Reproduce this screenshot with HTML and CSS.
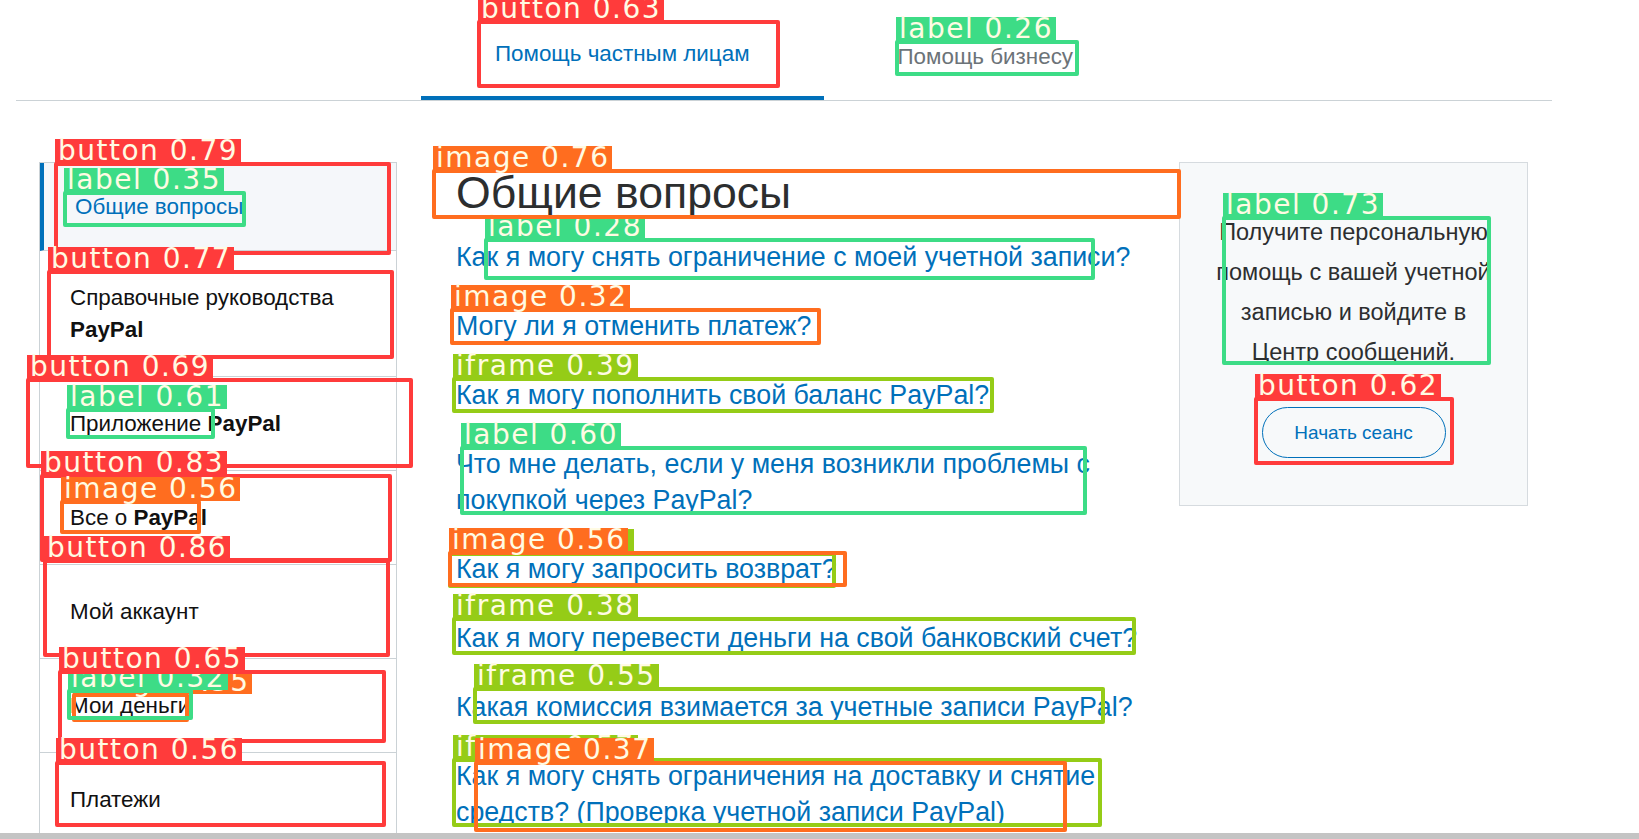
FILE: index.html
```html
<!DOCTYPE html>
<html lang="ru">
<head>
<meta charset="utf-8">
<title>Центр помощи</title>
<link rel="stylesheet" href="styles.css">
</head>
<body>
<div class="page">
  <nav class="tabs">
    <div class="tab active">Помощь частным лицам</div>
    <div class="tab tab-business">Помощь бизнесу</div>
  </nav>
  <div class="content">
    <aside class="nav">
      <div class="nav-item active">Общие вопросы</div>
      <div class="nav-item">Справочные руководства <b>PayPal</b></div>
      <div class="nav-item">Приложение <b>PayPal</b></div>
      <div class="nav-item">Все о <b>PayPal</b></div>
      <div class="nav-item">Мой аккаунт</div>
      <div class="nav-item">Мои деньги</div>
      <div class="nav-item">Платежи</div>
    </aside>
    <main class="main">
      <h1>Общие вопросы</h1>
      <ul class="faq">
        <li>Как я могу снять ограничение с моей учетной записи?</li>
        <li>Могу ли я отменить платеж?</li>
        <li>Как я могу пополнить свой баланс PayPal?</li>
        <li>Что мне делать, если у меня возникли проблемы с покупкой через PayPal?</li>
        <li>Как я могу запросить возврат?</li>
        <li>Как я могу перевести деньги на свой банковский счет?</li>
        <li>Какая комиссия взимается за учетные записи PayPal?</li>
        <li>Как я могу снять ограничения на доставку и снятие средств? (Проверка учетной записи PayPal)</li>
      </ul>
    </main>
    <section class="panel">
      <p>Получите персональную помощь с вашей учетной записью и войдите в Центр сообщений.</p>
      <button class="btn">Начать сеанс</button>
    </section>
  </div>
</div>

<div class="overlay">
  <div class="det r" style="left:477px;top:20px;width:303px;height:68px"><span class="tag">button 0.63</span></div>
  <div class="det g" style="left:895px;top:40px;width:184px;height:36px"><span class="tag">label 0.26</span></div>

  <div class="det r" style="left:54px;top:162px;width:337px;height:93px"><span class="tag">button 0.79</span></div>
  <div class="det g" style="left:63px;top:191px;width:183px;height:36px"><span class="tag">label 0.35</span></div>
  <div class="det r" style="left:47px;top:270px;width:347px;height:89px"><span class="tag">button 0.77</span></div>
  <div class="det r" style="left:26px;top:378px;width:387px;height:90px"><span class="tag">button 0.69</span></div>
  <div class="det g" style="left:66px;top:408px;width:149px;height:31px"><span class="tag">label 0.61</span></div>
  <div class="det r" style="left:40px;top:474px;width:352px;height:88px"><span class="tag">button 0.83</span></div>
  <div class="det o" style="left:60px;top:500px;width:141px;height:34px"><span class="tag">image 0.56</span></div>
  <div class="det r" style="left:43px;top:559px;width:347px;height:98px"><span class="tag">button 0.86</span></div>
  <div class="det o" style="left:72px;top:693px;width:117px;height:29px"><span class="tag">image 0.35</span></div>
  <div class="det g" style="left:67px;top:689px;width:126px;height:31px"><span class="tag">label 0.32</span></div>
  <div class="det r" style="left:58px;top:670px;width:328px;height:73px"><span class="tag">button 0.65</span></div>
  <div class="det r" style="left:55px;top:761px;width:331px;height:66px"><span class="tag">button 0.56</span></div>

  <div class="det g" style="left:484px;top:238px;width:611px;height:42px"><span class="tag">label 0.28</span></div>
  <div class="det o" style="left:432px;top:169px;width:749px;height:50px"><span class="tag">image 0.76</span></div>
  <div class="det o" style="left:450px;top:308px;width:371px;height:37px"><span class="tag">image 0.32</span></div>
  <div class="det l" style="left:452px;top:377px;width:542px;height:36px"><span class="tag">iframe 0.39</span></div>
  <div class="det g" style="left:460px;top:446px;width:627px;height:69px"><span class="tag">label 0.60</span></div>
  <div class="det l" style="left:448px;top:552px;width:388px;height:36px"><span class="tag">iframe 0.41</span></div>
  <div class="det o" style="left:448px;top:551px;width:399px;height:36px"><span class="tag">image 0.56</span></div>
  <div class="det l" style="left:452px;top:617px;width:684px;height:38px"><span class="tag">iframe 0.38</span></div>
  <div class="det l" style="left:473px;top:687px;width:632px;height:37px"><span class="tag">iframe 0.55</span></div>
  <div class="det l" style="left:452px;top:758px;width:650px;height:69px"><span class="tag">iframe 0.57</span></div>
  <div class="det o" style="left:474px;top:761px;width:593px;height:71px"><span class="tag">image 0.37</span></div>

  <div class="det g" style="left:1222px;top:216px;width:269px;height:149px"><span class="tag">label 0.73</span></div>
  <div class="det r" style="left:1254px;top:397px;width:200px;height:68px"><span class="tag">button 0.62</span></div>
</div>

<div class="hscroll"></div>
</body>
</html>
```

FILE: styles.css
```css
html, body {
  margin: 0;
  padding: 0;
  overflow: hidden;
  background: #ffffff;
}

body {
  position: relative;
  height: 839px;
  font-family: "Liberation Sans", Arial, sans-serif;
  color: #2c2e2f;
}

.page {
  width: 1536px;
  margin-left: 16px;
}

/* Tabs */
.tabs {
  display: flex;
  justify-content: center;
  border-bottom: 1px solid #cbd2d6;
}

.tab {
  padding: 41px 74px 29px;
  font-size: 22.4px;
  line-height: 26px;
  color: #6c7378;
  border-bottom: 4px solid transparent;
  white-space: nowrap;
}

.tab.active {
  color: #0070ba;
  border-bottom-color: #0070ba;
}

.tab.tab-business {
  padding-top: 44px;
  padding-bottom: 26px;
}

/* Content row */
.content {
  display: flex;
  align-items: flex-start;
  padding: 61px 24px 0 23px;
}

/* Left navigation */
.nav {
  flex: none;
  width: 358px;
  box-sizing: border-box;
  border: 1px solid #cbd2d6;
  border-bottom: none;
}

.nav-item {
  padding: 30.5px 20px 30.5px 30px;
  font-size: 22.4px;
  line-height: 32px;
  color: #111111;
  border-bottom: 1px solid #cbd2d6;
}

.nav-item b {
  font-weight: 700;
}

.nav-item.active {
  padding: 28px 20px 27px 31px;
  border-left: 4px solid #0070ba;
  background: #f5f7fa;
  color: #0070ba;
}

/* Main column */
.main {
  flex: none;
  width: 700px;
  margin-left: 59px;
  padding-top: 7px;
}

.main h1 {
  margin: 0;
  font-size: 44.6px;
  line-height: 48px;
  font-weight: 400;
  color: #2c2e2f;
}

.faq {
  list-style: none;
  margin: 22px 0 0;
  padding: 0;
}

.faq li {
  font-size: 26.8px;
  line-height: 36px;
  color: #0070ba;
  margin-bottom: 33px;
}

/* Right panel */
.panel {
  flex: none;
  width: 349px;
  box-sizing: border-box;
  margin-left: auto;
  border: 1px solid #d6dbdf;
  background: #f7f9fa;
  padding: 49px 30px 47px;
  text-align: center;
}

.panel p {
  margin: 0;
  font-size: 23.5px;
  line-height: 40px;
  color: #2c2e2f;
}

.btn {
  display: block;
  margin: 35px auto 0;
  width: 184px;
  height: 51px;
  box-sizing: border-box;
  border: 1px solid #0070ba;
  border-radius: 26px;
  background: transparent;
  color: #0070ba;
  font-family: "Liberation Sans", Arial, sans-serif;
  font-size: 19px;
  padding: 0;
}

/* Bottom scroll strip */
.hscroll {
  position: fixed;
  left: 0;
  right: 0;
  bottom: 0;
  height: 6px;
  background: #c4c4c4;
}

/* Detection overlay */
.overlay {
  position: absolute;
  left: 0;
  top: 0;
  width: 100%;
  height: 100%;
  pointer-events: none;
}

.det {
  position: absolute;
  box-sizing: border-box;
  border: 4px solid;
  border-radius: 2px;
}

.det .tag {
  position: absolute;
  left: -3px;
  top: -27px;
  height: 24px;
  padding: 0 3px;
  font-family: "DejaVu Sans", sans-serif;
  font-size: 28px;
  line-height: 24px;
  letter-spacing: 1.5px;
  color: #fffbe3;
  white-space: nowrap;
}

.det.r { border-color: #ff3b3b; }
.det.r .tag { background: #ff3b3b; }

.det.g { border-color: #3ddc86; }
.det.g .tag { background: #3ddc86; }

.det.o { border-color: #ff6d1f; }
.det.o .tag { background: #ff6d1f; }

.det.l { border-color: #95cc17; }
.det.l .tag { background: #95cc17; }
```
